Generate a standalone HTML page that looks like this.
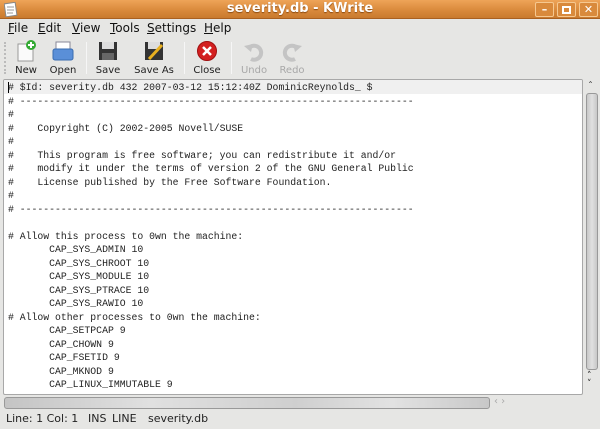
<!DOCTYPE html>
<html><head><style>
*{margin:0;padding:0;box-sizing:border-box}
body{width:600px;height:429px;overflow:hidden;background:#e6e6e4;font-family:"DejaVu Sans","Liberation Sans",sans-serif;position:relative}
.title{position:absolute;left:0;top:0;width:600px;height:19px;background:linear-gradient(#eea458,#d8883a 60%,#c97a2e);border-bottom:1px solid #a96020}
.title .t{position:absolute;left:0;width:600px;top:1px;text-align:center;color:#fff;font-weight:bold;font-size:13px;text-shadow:0 1px 1px #8a4a10}
.wb{position:absolute;top:2px;width:19px;height:15px;border:1px solid #f6c890;background:#d98a3c;border-radius:2px;color:#fff;font-size:11px;text-align:center;line-height:13px;font-weight:bold}
.menu{position:absolute;top:19px;left:0;width:600px;height:18px;font-size:12px;color:#111}
.menu span{position:absolute;top:2px}
.tb{position:absolute;top:37px;left:0;width:600px;height:41px}
.btn{position:absolute;top:3px;text-align:center;font-size:10px;color:#222}
.btn .l{position:absolute;top:25px;left:-20px;right:-20px;text-align:center}
.dis{color:#a8a8a8}
.sep{position:absolute;top:5px;width:1px;height:32px;background:#cfcfcf;border-right:1px solid #f6f6f6}
.ed{position:absolute;left:3px;top:79px;width:580px;height:316px;background:#fff;border:1px solid #a8a8a8;border-radius:2px;overflow:hidden}
.cl{position:absolute;left:0;top:0;width:100%;height:14px;background:#f0f0f0}
pre{position:absolute;left:4px;top:1px;font-family:"Liberation Mono","DejaVu Sans Mono",monospace;font-size:9.8px;line-height:13.5px;color:#222}
.vs{position:absolute;left:585px;top:79px;width:14px;height:316px}
.hs{position:absolute;left:4px;top:397px;width:486px;height:12px;border:1px solid #999;border-radius:3px;background:linear-gradient(90deg,#c4c4c4,#e0e0e0 30%,#cfcfcf 60%,#e2e2e2 80%,#c8c8c8)}
.st{position:absolute;top:412px;font-size:11px;color:#222}
</style></head><body>
<div class="title">
<svg style="position:absolute;left:4px;top:2px" width="14" height="15"><rect x="1" y="1" width="11" height="13" fill="#fff" stroke="#888" transform="rotate(-8 7 7)"/><path d="M3 5h7M3 8h7M3 11h6" stroke="#999"/></svg>
<div class="t">severity.db - KWrite</div>
<div class="wb" style="left:535px">&#8211;</div>
<div class="wb" style="left:557px"><div style="width:9px;height:8px;border:2px solid #fff;margin:3px auto"></div></div>
<div class="wb" style="left:579px">✕</div>
</div>
<div class="menu">
<span style="left:8px"><u>F</u>ile</span><span style="left:38px"><u>E</u>dit</span><span style="left:72px"><u>V</u>iew</span><span style="left:110px"><u>T</u>ools</span><span style="left:147px"><u>S</u>ettings</span><span style="left:204px"><u>H</u>elp</span>
</div>
<div class="tb">
<div style="position:absolute;left:4px;top:5px;width:2px;height:32px;border-left:2px dotted #bbb"></div>
<div class="btn" style="left:15px;width:22px"><svg width="22" height="22"><path d="M3 4h10l5 5v12H3z" fill="#fafafa" stroke="#999"/><circle cx="16" cy="5" r="5" fill="#3a3"/><path d="M16 2v6M13 5h6" stroke="#fff" stroke-width="2"/></svg><div class="l">New</div></div>
<div class="btn" style="left:52px;width:22px"><svg width="22" height="22"><rect x="4" y="2" width="14" height="8" fill="#fff" stroke="#889"/><rect x="1" y="9" width="20" height="11" rx="2" fill="#5a8fd8" stroke="#3a6cb0"/></svg><div class="l">Open</div></div>
<div class="sep" style="left:86px"></div>
<div class="btn" style="left:97px;width:22px"><svg width="22" height="22"><rect x="2" y="2" width="18" height="18" fill="#333"/><rect x="5" y="2" width="12" height="7" fill="#ddd"/><rect x="5" y="13" width="12" height="7" fill="#666"/></svg><div class="l">Save</div></div>
<div class="btn" style="left:143px;width:22px"><svg width="22" height="22"><rect x="2" y="2" width="18" height="18" fill="#333"/><rect x="5" y="2" width="12" height="7" fill="#ddd"/><path d="M6 19L19 5" stroke="#e8b020" stroke-width="3"/></svg><div class="l">Save As</div></div>
<div class="sep" style="left:184px"></div>
<div class="btn" style="left:196px;width:22px"><svg width="22" height="22"><circle cx="11" cy="11" r="9.5" fill="#d32020" stroke="#a01010"/><path d="M7 7l8 8M15 7l-8 8" stroke="#fff" stroke-width="2.5"/></svg><div class="l">Close</div></div>
<div class="sep" style="left:231px"></div>
<div class="btn dis" style="left:243px;width:22px"><svg width="22" height="22"><path d="M6 8a7 7 0 1 1 2 11" fill="none" stroke="#c4c4c4" stroke-width="4"/><path d="M1 6l9-2-2 8z" fill="#c4c4c4"/></svg><div class="l">Undo</div></div>
<div class="btn dis" style="left:281px;width:22px"><svg width="22" height="22"><path d="M16 8a7 7 0 1 0-2 11" fill="none" stroke="#c4c4c4" stroke-width="4"/><path d="M21 6l-9-2 2 8z" fill="#c4c4c4"/></svg><div class="l">Redo</div></div>
</div>
<div class="ed"><div class="cl"></div><div style="position:absolute;left:4px;top:2px;width:1px;height:11px;background:#000"></div>
<pre># $Id: severity.db 432 2007-03-12 15:12:40Z DominicReynolds_ $
# -------------------------------------------------------------------
#
#    Copyright (C) 2002-2005 Novell/SUSE
#
#    This program is free software; you can redistribute it and/or
#    modify it under the terms of version 2 of the GNU General Public
#    License published by the Free Software Foundation.
#
# -------------------------------------------------------------------

# Allow this process to 0wn the machine:
       CAP_SYS_ADMIN 10
       CAP_SYS_CHROOT 10
       CAP_SYS_MODULE 10
       CAP_SYS_PTRACE 10
       CAP_SYS_RAWIO 10
# Allow other processes to 0wn the machine:
       CAP_SETPCAP 9
       CAP_CHOWN 9
       CAP_FSETID 9
       CAP_MKNOD 9
       CAP_LINUX_IMMUTABLE 9</pre></div>
<div class="vs">
<div style="position:absolute;left:3px;top:2px;font-size:10px;color:#333">&#710;</div>
<div style="position:absolute;left:1px;top:14px;width:12px;height:277px;border:1px solid #999;border-radius:3px;background:linear-gradient(90deg,#c8c8c8,#e0e0e0,#c8c8c8)"></div>
<div style="position:absolute;left:2px;top:293px;font-size:9px;color:#222;line-height:8px">&#708;<br>&#709;</div>
</div>
<div class="hs"></div>
<div style="position:absolute;left:494px;top:396px;font-size:10px;color:#aaa">&lsaquo; &rsaquo;</div>
<div class="st" style="left:6px">Line: 1 Col: 1</div>
<div class="st" style="left:88px">INS</div>
<div class="st" style="left:112px">LINE</div>
<div class="st" style="left:148px">severity.db</div>
</body></html>
